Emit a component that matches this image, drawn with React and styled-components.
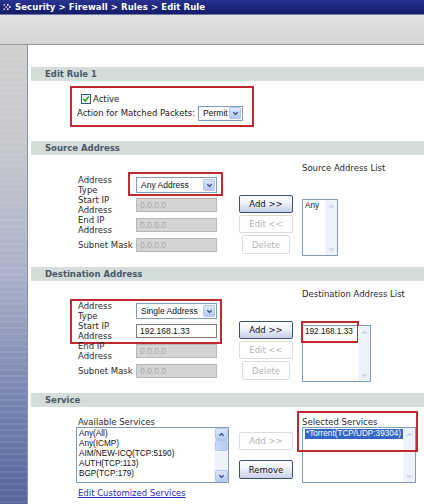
import React from 'react';
import styled, { createGlobalStyle } from 'styled-components';

const GlobalStyle = createGlobalStyle`
  html, body {
    margin: 0;
    padding: 0;
    background: #fff;
  }
  body {
    width: 424px;
    height: 504px;
    overflow: hidden;
    font-family: "DejaVu Sans", Verdana, sans-serif;
  }
`;

const Page = styled.div`
  width: 424px;
  height: 504px;
  display: flex;
  flex-direction: column;
  overflow: hidden;
`;

const TitleBar = styled.div`
  height: 14px;
  flex: none;
  display: flex;
  align-items: center;
  gap: 4px;
  padding-left: 3px;
  background: linear-gradient(#283290, #151c68);
  border-bottom: 1px solid #7078a8;
  color: #fff;
  font: bold 8.5px/14px "DejaVu Sans", sans-serif;
  letter-spacing: 0.1px;
  white-space: nowrap;
`;

const Band = styled.div`
  height: 29px;
  flex: none;
  background: linear-gradient(#e2e2e2, #d5d5d5);
  border-bottom: 1px solid #9a9a9a;
`;

const Body = styled.div`
  flex: 1;
  display: flex;
  min-height: 0;
`;

const Sidebar = styled.div`
  width: 27px;
  flex: none;
  border-right: 1px solid #8a90a8;
  background:
    repeating-linear-gradient(rgba(255, 255, 255, 0.07) 0 2px, transparent 2px 6px),
    linear-gradient(#d0d0d0 0%, #c4c6cd 25%, #aab1c8 50%, #7c88b4 75%, #55649a 100%);
`;

const Panel = styled.div`
  flex: 1;
  background: #fff;
  padding: 22px 0 0 3px;
`;

const SectionHeader = styled.div`
  height: 14px;
  padding-left: 14px;
  background: #d5dddb;
  color: #4b5767;
  font: bold 8.5px/14px "DejaVu Sans", sans-serif;
`;

const RuleBody = styled.div`
  padding: 5px 0 14px 39px;
`;

const RuleBox = styled.div`
  width: 184px;
  height: 41px;
  box-sizing: border-box;
  border: 2px solid #be2a2e;
  padding: 4px 0 0 5px;
`;

const CheckRow = styled.label`
  display: flex;
  align-items: center;
  gap: 2px;
  height: 13px;
  padding-left: 4px;
  font: 8.5px/10px "DejaVu Sans", sans-serif;
  color: #222;
`;

const ActionRow = styled.div`
  display: flex;
  align-items: center;
  gap: 3px;
  height: 16px;
  font: 8.5px/10px "DejaVu Sans", sans-serif;
  color: #222;
  white-space: nowrap;
`;

const AddrBody = styled.div`
  display: flex;
  align-items: flex-start;
  padding: 8px 0 11px 47px;
`;

const FormCol = styled.div`
  display: flex;
  flex-direction: column;
  margin-top: 12px;
`;

const FormRow = styled.div`
  display: flex;
  align-items: center;
  height: 20px;
`;

const Label = styled.div`
  width: 58px;
  flex: none;
  font: 8.5px/10px "DejaVu Sans", sans-serif;
  color: #2a2a2a;
  white-space: nowrap;
`;

const Highlight = styled.div`
  border: 2px solid #be2a2e;
  padding: ${(p) => p.$pad};
  margin: ${(p) => p.$margin};
`;

const TextBox = styled.div`
  width: 81px;
  height: 14px;
  box-sizing: border-box;
  padding-left: 3px;
  border: 1px solid ${(p) => (p.$disabled ? '#b8b8b8' : '#7c7c7c')};
  background: ${(p) => (p.$disabled ? '#d4d4d4' : '#fff')};
  color: ${(p) => (p.$disabled ? '#a9a9a9' : '#111')};
  font: 8.5px/12px "Liberation Sans", Arial, sans-serif;
`;

const Select = styled.div`
  width: ${(p) => p.$w}px;
  height: ${(p) => p.$h}px;
  box-sizing: border-box;
  display: flex;
  align-items: center;
  justify-content: space-between;
  border: 1px solid #7f9db9;
  background: #fff;
  padding: 0 1px 0 4px;
  color: #111;
  font: 8.5px/12px "Liberation Sans", Arial, sans-serif;
`;

const DropBtn = styled.div`
  width: 12px;
  height: 12px;
  flex: none;
  display: flex;
  align-items: center;
  justify-content: center;
  box-sizing: border-box;
  border: 1px solid #b5c6ee;
  border-radius: 1px;
  background: linear-gradient(#dbe5fd, #b6c9f5);
`;

const ButtonCol = styled.div`
  display: flex;
  flex-direction: column;
  align-items: center;
  gap: ${(p) => p.$gap}px;
  width: 54px;
  margin: ${(p) => p.$top}px 0 0 ${(p) => p.$left}px;
`;

const Button = styled.div`
  width: ${(p) => p.$w || 54}px;
  height: ${(p) => p.$h || 18}px;
  box-sizing: border-box;
  display: flex;
  align-items: center;
  justify-content: center;
  border-radius: 2px;
  border: 1px solid ${(p) => (p.$disabled ? '#dcdcdc' : '#3d4f80')};
  background: ${(p) =>
    p.$disabled ? '#fff' : 'linear-gradient(#ffffff 0%, #eef1f8 45%, #c7cfe6 100%)'};
  color: ${(p) => (p.$disabled ? '#b4b4b4' : '#111')};
  font: 8.5px/10px "DejaVu Sans", sans-serif;
  white-space: nowrap;
`;

const ListCol = styled.div`
  position: relative;
  display: flex;
  flex-direction: column;
  margin-left: 9px;
`;

const ListTitle = styled.div`
  height: ${(p) => p.$h}px;
  padding-left: ${(p) => p.$indent || 0}px;
  font: 8.5px/10px "DejaVu Sans", sans-serif;
  color: #2a2a2a;
  white-space: nowrap;
`;

const ListBox = styled.div`
  width: ${(p) => p.$w}px;
  height: ${(p) => p.$h}px;
  margin-top: ${(p) => p.$top || 0}px;
  box-sizing: border-box;
  display: flex;
  border: 1px solid #7f9db9;
  background: #fff;
`;

const ListItems = styled.div`
  flex: 1;
  min-width: 0;
  padding: 1px 2px;
  font: 8.2px/10px "Liberation Sans", Arial, sans-serif;
  color: #111;
`;

const ListItem = styled.div`
  white-space: nowrap;
  ${(p) =>
    p.$selected &&
    `
    display: inline-block;
    background: #3168c6;
    color: #fff;
    padding: 0 2px 0 1px;
  `}
`;

const ScrollTrack = styled.div`
  width: ${(p) => p.$w}px;
  flex: none;
  display: flex;
  flex-direction: column;
  justify-content: space-between;
  background: #eef2fa;
  border-left: 1px solid #f6f8fc;
`;

const ScrollBtn = styled.div`
  height: ${(p) => p.$h}px;
  display: flex;
  align-items: center;
  justify-content: center;
  box-sizing: border-box;
  border-radius: 2px;
  ${(p) =>
    p.$active
      ? 'background: linear-gradient(#dce6fd, #b9cbf4); border: 1px solid #b4c5ec;'
      : 'background: transparent;'}
`;

const Thumb = styled.div`
  height: 11px;
  margin: 0 0 auto;
  box-sizing: border-box;
  border-radius: 2px;
  border: 1px solid #b4c5ec;
  background: linear-gradient(90deg, #c9d7fb, #b7c9f3);
`;

const ServiceBody = styled.div`
  display: flex;
  align-items: flex-start;
  padding: 10px 0 0 45px;
`;

const ServiceCol = styled.div`
  display: flex;
  flex-direction: column;
`;

const Overlay = styled.div`
  position: absolute;
  left: -5px;
  top: -6px;
  width: 121px;
  height: 41px;
  box-sizing: border-box;
  border: 2px solid #be2a2e;
  pointer-events: none;
`;

const LinkRow = styled.div`
  padding: 5px 0 0 47px;
  font: 8.5px/10px "DejaVu Sans", sans-serif;
`;

const Link = styled.a`
  color: #2b2bc0;
  text-decoration: underline;
`;

const Chevron = ({ dir = 'down', color = '#34508a', size = 7 }) => (
  <svg width={size} height={size} viewBox="0 0 8 8">
    <path
      d={dir === 'down' ? 'M1.5 2.5 L4 5 L6.5 2.5' : 'M1.5 5.5 L4 3 L6.5 5.5'}
      fill="none"
      stroke={color}
      strokeWidth="1.6"
    />
  </svg>
);

const Crumb = () => (
  <svg width="8" height="8" viewBox="0 0 8 8">
    <rect x="0.5" y="1" width="1.6" height="1.6" fill="#c8cce8" />
    <rect x="2.5" y="3.2" width="1.6" height="1.6" fill="#c8cce8" />
    <rect x="0.5" y="5.4" width="1.6" height="1.6" fill="#c8cce8" />
    <rect x="4" y="1" width="1.6" height="1.6" fill="#ffffff" />
    <rect x="6" y="3.2" width="1.6" height="1.6" fill="#ffffff" />
    <rect x="4" y="5.4" width="1.6" height="1.6" fill="#ffffff" />
  </svg>
);

const CheckBox = () => (
  <svg width="10" height="10" viewBox="0 0 10 10">
    <rect x="0.5" y="0.5" width="9" height="9" fill="#f4f8f2" stroke="#2b5a7a" />
    <path d="M2.3 5 L4.2 7 L7.8 2.6" fill="none" stroke="#27a12a" strokeWidth="1.6" />
  </svg>
);

const Dropdown = ({ value, w = 81, h = 16 }) => (
  <Select $w={w} $h={h}>
    <span>{value}</span>
    <DropBtn>
      <Chevron />
    </DropBtn>
  </Select>
);

const Scroll = ({ w = 11, active }) => (
  <ScrollTrack $w={w}>
    <ScrollBtn $h={12} $active={active}>
      <Chevron dir="up" size={7} color={active ? '#34508a' : '#c4cfe6'} />
    </ScrollBtn>
    {active && <Thumb />}
    <ScrollBtn $h={12} $active={active}>
      <Chevron dir="down" size={7} color={active ? '#34508a' : '#c4cfe6'} />
    </ScrollBtn>
  </ScrollTrack>
);

const IpRow = ({ label, value = '0.0.0.0', disabled = true }) => (
  <FormRow>
    <Label>{label}</Label>
    <TextBox $disabled={disabled}>{value}</TextBox>
  </FormRow>
);

const TwoLine = ({ a, b }) => (
  <>
    {a}
    <br />
    {b}
  </>
);

const AddressButtons = () => (
  <ButtonCol $top={32} $left={22} $gap={2}>
    <Button>Add &gt;&gt;</Button>
    <Button $disabled>Edit &lt;&lt;</Button>
    <Button $disabled $w={48} $h={19}>
      Delete
    </Button>
  </ButtonCol>
);

const services = ['Any(All)', 'Any(ICMP)', 'AIM/NEW-ICQ(TCP:5190)', 'AUTH(TCP:113)', 'BGP(TCP:179)'];

const App = () => (
  <Page>
    <GlobalStyle />
    <TitleBar>
      <Crumb />
      <span>Security &gt; Firewall &gt; Rules &gt; Edit Rule</span>
    </TitleBar>
    <Band />
    <Body>
      <Sidebar />
      <Panel>
        <SectionHeader>Edit Rule 1</SectionHeader>
        <RuleBody>
          <RuleBox>
            <CheckRow>
              <CheckBox />
              Active
            </CheckRow>
            <ActionRow>
              Action for Matched Packets:
              <Dropdown value="Permit" w={45} h={15} />
            </ActionRow>
          </RuleBox>
        </RuleBody>

        <SectionHeader>Source Address</SectionHeader>
        <AddrBody>
          <FormCol>
            <FormRow>
              <Label>
                <TwoLine a="Address" b="Type" />
              </Label>
              <Highlight $pad="3px 4px 1px 6px" $margin="-5px -6px -3px -8px">
                <Dropdown value="Any Address" />
              </Highlight>
            </FormRow>
            <IpRow label={<TwoLine a="Start IP" b="Address" />} />
            <IpRow label={<TwoLine a="End IP" b="Address" />} />
            <IpRow label="Subnet Mask" />
          </FormCol>
          <AddressButtons />
          <ListCol>
            <ListTitle $h={12}>Source Address List</ListTitle>
            <ListBox $w={36} $h={57} $top={24}>
              <ListItems>
                <ListItem>Any</ListItem>
              </ListItems>
              <Scroll />
            </ListBox>
          </ListCol>
        </AddrBody>

        <SectionHeader>Destination Address</SectionHeader>
        <AddrBody>
          <FormCol>
            <Highlight $pad="0 3px 1px 6px" $margin="-2px -5px -3px -8px">
              <FormRow>
                <Label>
                  <TwoLine a="Address" b="Type" />
                </Label>
                <Dropdown value="Single Address" />
              </FormRow>
              <IpRow disabled={false} value="192.168.1.33" label={<TwoLine a="Start IP" b="Address" />} />
            </Highlight>
            <IpRow label={<TwoLine a="End IP" b="Address" />} />
            <IpRow label="Subnet Mask" />
          </FormCol>
          <AddressButtons />
          <ListCol>
            <ListTitle $h={12}>Destination Address List</ListTitle>
            <ListBox $w={69} $h={57} $top={24}>
              <ListItems>
                <Highlight $pad="4px 3px 4px 2px" $margin="-6px -3px 0 -4px">
                  <ListItem>192.168.1.33</ListItem>
                </Highlight>
              </ListItems>
              <Scroll />
            </ListBox>
          </ListCol>
        </AddrBody>

        <SectionHeader>Service</SectionHeader>
        <ServiceBody>
          <ServiceCol>
            <ListTitle $h={10} $indent={2}>
              Available Services
            </ListTitle>
            <ListBox $w={153} $h={56}>
              <ListItems>
                {services.map((s) => (
                  <ListItem key={s}>{s}</ListItem>
                ))}
              </ListItems>
              <Scroll w={13} active />
            </ListBox>
          </ServiceCol>
          <ButtonCol $top={15} $left={10} $gap={10}>
            <Button $disabled>Add &gt;&gt;</Button>
            <Button $h={19}>Remove</Button>
          </ButtonCol>
          <ListCol>
            <ListTitle $h={10}>Selected Services</ListTitle>
            <ListBox $w={114} $h={56}>
              <ListItems>
                <ListItem $selected>*Torrent(TCP/UDP:39304)</ListItem>
              </ListItems>
              <Scroll />
            </ListBox>
            <Overlay />
          </ListCol>
        </ServiceBody>
        <LinkRow>
          <Link href="#">Edit Customized Services</Link>
        </LinkRow>
      </Panel>
    </Body>
  </Page>
);

export default App;
